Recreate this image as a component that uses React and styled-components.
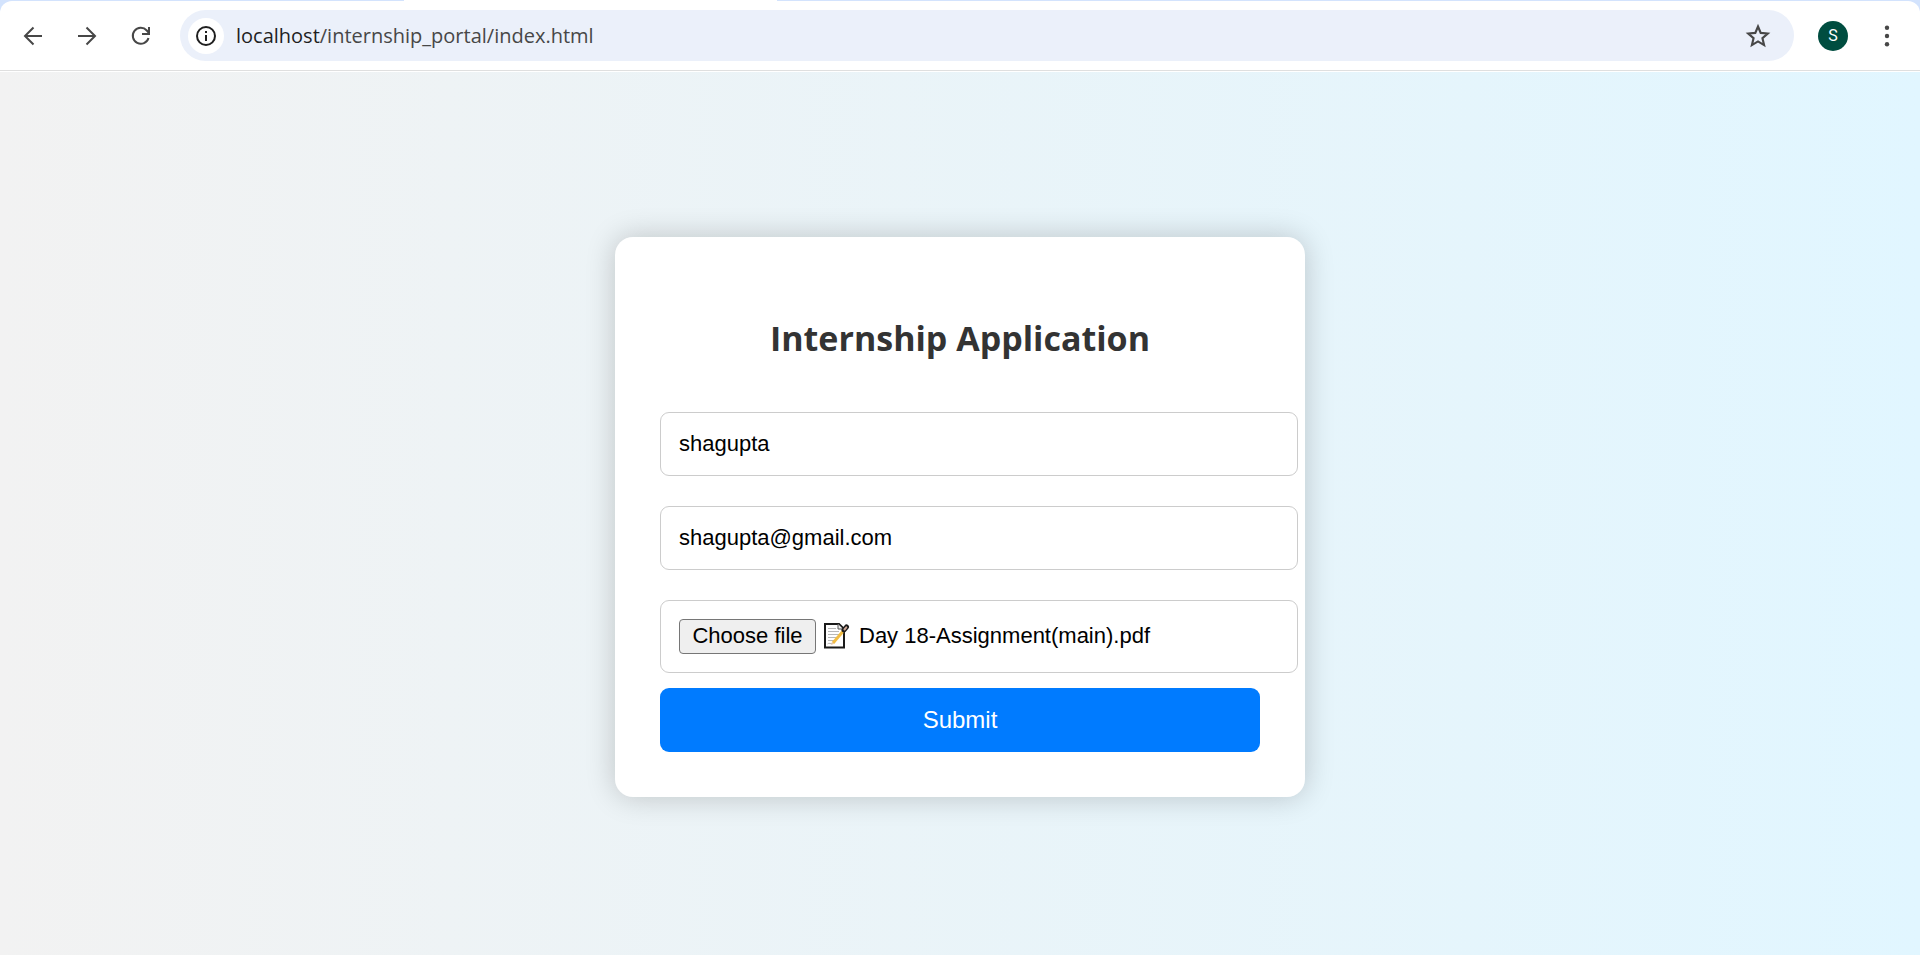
import React, { useRef, useState } from 'react';
import styled, { createGlobalStyle } from 'styled-components';

const GlobalStyle = createGlobalStyle`
  *, *::before, *::after { box-sizing: border-box; }
  body { margin: 0; font-family: 'Open Sans', 'Noto Sans', sans-serif; }
`;

const Page = styled.div`
  min-height: 100vh;
  display: flex;
  flex-direction: column;
  background: #fff;
`;

const Chrome = styled.header`
  background: #d3e3fd;
`;

const TabStrip = styled.div`
  height: 1px;
  padding-left: 404px;
`;

const ActiveTab = styled.div`
  width: 373px;
  height: 1px;
  background: #fff;
`;

const Toolbar = styled.div`
  display: flex;
  align-items: center;
  height: 70px;
  padding: 0 13px;
  background: #fff;
  border-bottom: 1px solid #dfdfdf;
  border-radius: 12px 12px 0 0;
`;

const Nav = styled.nav`
  display: flex;
  gap: 14px;
  margin-right: 19px;
`;

const IconButton = styled.button`
  display: flex;
  align-items: center;
  justify-content: center;
  width: 40px;
  height: 40px;
  padding: 0;
  border: 0;
  border-radius: 50%;
  background: transparent;
  color: #474747;
  cursor: pointer;
`;

const AddressBar = styled.div`
  flex: 1;
  display: flex;
  align-items: center;
  height: 51px;
  padding: 0 16px 0 8px;
  border-radius: 26px;
  background: #ebf0fa;
`;

const SiteInfo = styled(IconButton)`
  width: 36px;
  height: 36px;
  margin-right: 12px;
  background: #fff;
  color: #1f1f1f;
`;

const Url = styled.div`
  flex: 1;
  font-size: 20px;
  line-height: 30px;
  color: #474747;
`;

const Host = styled.span`
  color: #1f1f1f;
`;

const Avatar = styled.button`
  width: 30px;
  height: 30px;
  margin: 0 19px 0 24px;
  padding: 0;
  border: 0;
  border-radius: 50%;
  background: #004d40;
  color: #fff;
  font: 16px/30px Roboto, sans-serif;
  text-align: center;
  cursor: pointer;
`;

const Main = styled.main`
  flex: 1;
  display: flex;
  align-items: center;
  justify-content: center;
  margin-top: 1px;
  padding-top: 6px;
  background: linear-gradient(to right, #f2f2f2, #e1f6ff);
`;

const Card = styled.form`
  width: 690px;
  padding: 45px;
  border-radius: 18px;
  background: #fff;
  box-shadow: 0 0 30px rgba(0, 0, 0, 0.2);
`;

const Title = styled.h2`
  margin: 32px 0 50px;
  color: #333;
  font-size: 34px;
  line-height: 48px;
  font-weight: 700;
  text-align: center;
`;

/* Fields keep a 38px overhang past the card's content column. */
const Field = styled.div`
  display: flex;
  align-items: center;
  width: calc(100% + 38px);
  min-height: 64px;
  margin-bottom: ${(p) => (p.$last ? 15 : 30)}px;
  padding: ${(p) => (p.$file ? 18 : 0)}px 18px;
  border: 1px solid #ccc;
  border-radius: 9px;
  background: #fff;
  font: 22px/26px 'Liberation Sans', Arial, sans-serif;
  color: #000;
`;

const TextInput = styled.input`
  flex: 1;
  height: 62px;
  padding: 0;
  border: 0;
  outline: 0;
  background: transparent;
  color: inherit;
  font: inherit;
`;

const ChooseButton = styled.button`
  width: 137px;
  height: 35px;
  margin-right: 7px;
  padding: 0;
  border: 1px solid #767676;
  border-radius: 4px;
  background: #efefef;
  color: #000;
  font: inherit;
  white-space: nowrap;
`;

const FileName = styled.span`
  margin-left: 9px;
`;

const Submit = styled.button`
  display: block;
  width: 100%;
  height: 64px;
  padding: 0;
  border: 0;
  border-radius: 9px;
  background: #007bff;
  color: #fff;
  font: 24px/28px 'Liberation Sans', Arial, sans-serif;
  cursor: pointer;
`;

const Stroke = ({ size, children }) => (
  <svg width={size} height={size} viewBox={`0 0 ${size} ${size}`} fill="none" stroke="currentColor" strokeWidth="2" aria-hidden="true">
    {children}
  </svg>
);

const BackIcon = () => (
  <Stroke size={20}>
    <path d="M19 10H3M10.5 1.5 2 10l8.500 8.500" />
  </Stroke>
);

const ForwardIcon = () => (
  <Stroke size={20}>
    <path d="M1 10h16M9.500 1.500 18 10l-8.500 8.500" />
  </Stroke>
);

const ReloadIcon = () => (
  <Stroke size={20}>
    <path d="M17.500 12A8 8 0 1 1 15.800 4.500L18 7" />
    <path d="M18 1v7h-7" />
  </Stroke>
);

const InfoIcon = () => (
  <Stroke size={22}>
    <circle cx="11" cy="11" r="9" />
    <path d="M11 10v6M11 6v2" />
  </Stroke>
);

const StarIcon = () => (
  <svg width="26" height="26" viewBox="0 0 24 24" fill="none" stroke="currentColor" strokeWidth="2" aria-hidden="true">
    <path d="M12 3.200 14.500 9.100 21 9.700 16.100 14 17.600 20.400 12 17 6.400 20.400 7.900 14 3 9.700 9.500 9.100Z" />
  </svg>
);

const MenuIcon = () => (
  <svg width="22" height="22" viewBox="0 0 22 22" fill="currentColor" aria-hidden="true">
    <circle cx="11" cy="2.800" r="2.200" />
    <circle cx="11" cy="11" r="2.200" />
    <circle cx="11" cy="19.200" r="2.200" />
  </svg>
);

const MemoIcon = () => (
  <svg width="27" height="28" viewBox="0 0 27 28" aria-hidden="true">
    <path d="M2 2h14l5 5v18.500H2Z" fill="#fff" stroke="#1b1b1b" strokeWidth="2" />
    <path d="M15 2v5h5" fill="#eee" stroke="#555" />
    <path d="M5 6.500h8M5 9.500h11M5 12.500h11M5 15.500h8M5 18.500h6" stroke="#b8b8b8" />
    <path d="M4.500 22c2-2 3 1 5-1" fill="none" stroke="#b8b8b8" />
    <path d="M10 21 22 7" stroke="#f2bd43" strokeWidth="3" />
    <path d="m8 23 1-3.200 2.300 1.900Z" fill="#ecc9a0" />
    <path d="m21 8 2.500-3" stroke="#1b1b1b" strokeWidth="5" strokeLinecap="round" />
    <path d="m21.500 7.500 1.800-2.200" stroke="#cda797" strokeWidth="2" strokeLinecap="round" />
  </svg>
);

export default function App() {
  const picker = useRef(null);
  const [name, setName] = useState('shagupta');
  const [email, setEmail] = useState('shagupta@gmail.com');
  const [fileName, setFileName] = useState('Day 18-Assignment(main).pdf');

  return (
    <Page>
      <GlobalStyle />
      <Chrome>
        <TabStrip>
          <ActiveTab />
        </TabStrip>
        <Toolbar>
          <Nav>
            <IconButton type="button" aria-label="Back"><BackIcon /></IconButton>
            <IconButton type="button" aria-label="Forward"><ForwardIcon /></IconButton>
            <IconButton type="button" aria-label="Reload"><ReloadIcon /></IconButton>
          </Nav>
          <AddressBar>
            <SiteInfo type="button" aria-label="Site information"><InfoIcon /></SiteInfo>
            <Url><Host>localhost</Host>/internship_portal/index.html</Url>
            <IconButton type="button" aria-label="Bookmark"><StarIcon /></IconButton>
          </AddressBar>
          <Avatar type="button">S</Avatar>
          <IconButton type="button" aria-label="Menu"><MenuIcon /></IconButton>
        </Toolbar>
      </Chrome>
      <Main>
        <Card onSubmit={(e) => e.preventDefault()}>
          <Title>Internship Application</Title>
          <Field>
            <TextInput type="text" aria-label="Name" value={name} onChange={(e) => setName(e.target.value)} />
          </Field>
          <Field>
            <TextInput type="email" aria-label="Email" value={email} onChange={(e) => setEmail(e.target.value)} />
          </Field>
          <Field $file $last>
            <input
              ref={picker}
              type="file"
              hidden
              aria-label="Resume"
              onChange={(e) => e.target.files[0] && setFileName(e.target.files[0].name)}
            />
            <ChooseButton type="button" onClick={() => picker.current.click()}>Choose file</ChooseButton>
            <MemoIcon />
            <FileName>{fileName}</FileName>
          </Field>
          <Submit type="submit">Submit</Submit>
        </Card>
      </Main>
    </Page>
  );
}
